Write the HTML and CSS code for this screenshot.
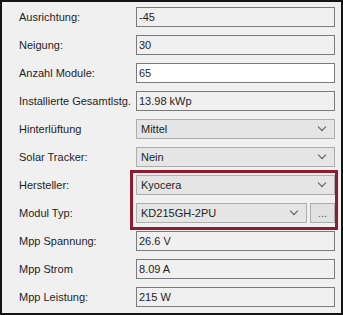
FILE: index.html
```html
<!DOCTYPE html>
<html lang="de">
<head>
    <meta charset="UTF-8">
    <meta name="viewport" content="width=device-width, initial-scale=1.0">
    <title>Modul Einstellungen</title>
    <link rel="stylesheet" href="styles.css">
</head>
<body>
    <div class="frame">
        <div class="form-grid">
            <span class="field-label">Ausrichtung:</span>
            <div class="text-box readonly">-45</div>

            <span class="field-label">Neigung:</span>
            <div class="text-box readonly">30</div>

            <span class="field-label">Anzahl Module:</span>
            <div class="text-box editable">65</div>

            <span class="field-label">Installierte Gesamtlstg.</span>
            <div class="text-box readonly">13.98 kWp</div>

            <span class="field-label">Hinterlüftung</span>
            <div class="combo"><span class="combo-text">Mittel</span><span class="chevron"></span></div>

            <span class="field-label">Solar Tracker:</span>
            <div class="combo"><span class="combo-text">Nein</span><span class="chevron"></span></div>

            <span class="field-label">Hersteller:</span>
            <div class="combo hersteller"><span class="combo-text">Kyocera</span><span class="chevron"></span></div>

            <span class="field-label">Modul Typ:</span>
            <div class="combo-row modul-typ">
                <div class="combo"><span class="combo-text">KD215GH-2PU</span><span class="chevron"></span></div>
                <div class="dots-button">...</div>
            </div>

            <span class="field-label">Mpp Spannung:</span>
            <div class="text-box readonly">26.6 V</div>

            <span class="field-label">Mpp Strom</span>
            <div class="text-box readonly">8.09 A</div>

            <span class="field-label">Mpp Leistung:</span>
            <div class="text-box readonly">215 W</div>

            <div class="highlight"></div>
        </div>
    </div>
</body>
</html>
```

FILE: styles.css
```css
body {
    margin: 0;
    font-family: 'Liberation Sans', Arial, sans-serif;
    font-size: 11px;
    color: #1e1e1e;
}

.frame {
    width: 343px;
    height: 315px;
    box-sizing: border-box;
    border: 2px solid #141414;
    background: #f0f0f0;
    padding: 5px 6px 0 17px;
}

.form-grid {
    display: grid;
    grid-template-columns: 117px 1fr;
    grid-auto-rows: 20px;
    row-gap: 8px;
    align-items: center;
}

.field-label {
    white-space: nowrap;
}

.text-box {
    height: 20px;
    box-sizing: border-box;
    border: 1px solid #7a7a7a;
    padding: 0 2px;
    line-height: 18px;
}
.readonly {
    background: #f0f0f0;
}
.editable {
    background: #ffffff;
}

.combo {
    height: 20px;
    box-sizing: border-box;
    border: 1px solid #adadad;
    background: #e5e5e5;
    display: flex;
    align-items: center;
    justify-content: space-between;
    padding: 0 9px 0 4px;
    flex: 1;
}
.chevron {
    width: 5px;
    height: 5px;
    border-right: 1px solid #555;
    border-bottom: 1px solid #555;
    transform: rotate(45deg);
    margin-top: -4px;
}

.hersteller {
    grid-column: 2;
    grid-row: 7;
}
.modul-typ {
    grid-column: 2;
    grid-row: 8;
}

.combo-row {
    display: flex;
    gap: 3px;
    height: 20px;
}
.dots-button {
    width: 25px;
    box-sizing: border-box;
    border: 1px solid #adadad;
    background: #e1e1e1;
    text-align: center;
    line-height: 18px;
    color: #555;
}

.highlight {
    grid-column: 2;
    grid-row: 7 / span 2;
    align-self: stretch;
    margin: -5px -3px -7px -6px;
    border: 3px solid #8c1c30;
    pointer-events: none;
}
```
